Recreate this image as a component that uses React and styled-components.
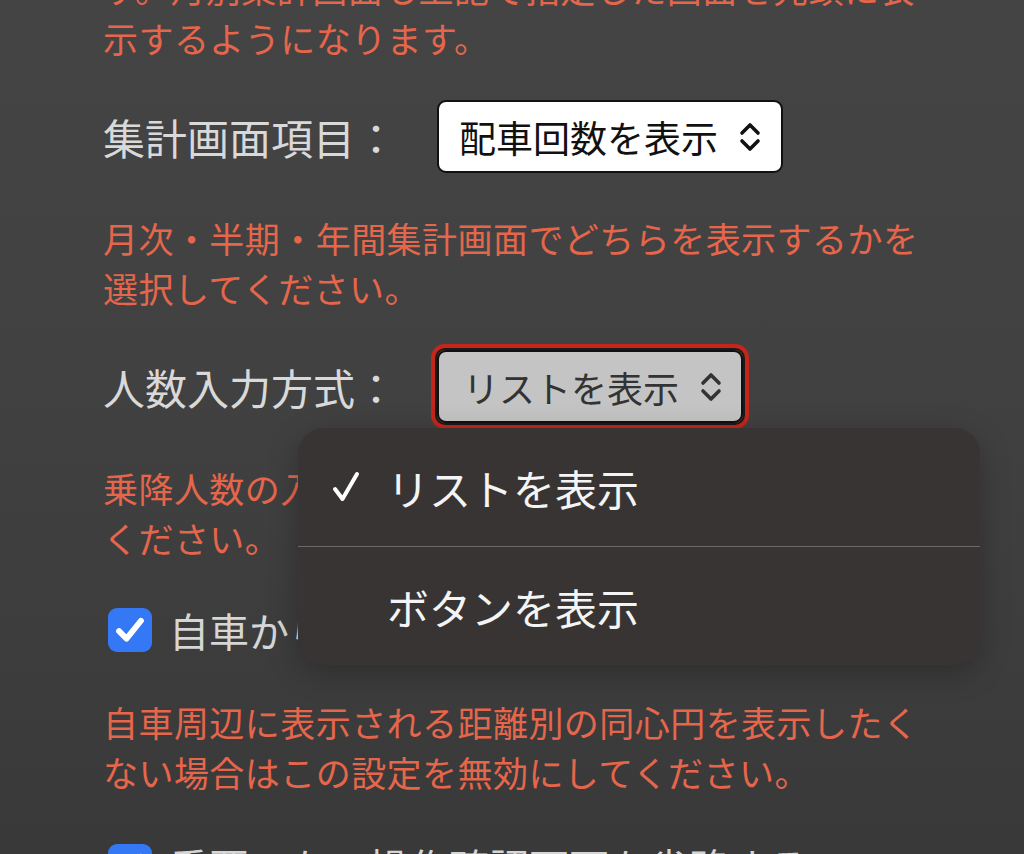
import React from 'react';
import styled, { createGlobalStyle } from 'styled-components';

const GlobalStyle = createGlobalStyle`
  html, body {
    margin: 0;
    padding: 0;
    height: 854px;
    overflow: hidden;
    background: #3e3e3e;
  }
`;

const Page = styled.div`
  height: 854px;
  overflow: hidden;
  box-sizing: border-box;
  padding: 0 60px 0 103px;
  background: linear-gradient(180deg, #444444 0%, #414141 45%, #393939 100%);
  font-family: 'Noto Sans CJK JP', 'Noto Sans', sans-serif;
`;

const Note = styled.p`
  margin: ${(p) => p.$top || 0}px 0 0;
  color: #e6664b;
  font-size: 35px;
  letter-spacing: 0.45px;
  line-height: 50px;
  white-space: nowrap;
`;

const SelectRow = styled.div`
  display: flex;
  align-items: center;
  margin: 37px 0 40px;
`;

const Label = styled.span`
  width: 334px;
  flex-shrink: 0;
  color: #d9d9d9;
  font-size: 42px;
  line-height: 60px;
  white-space: nowrap;
`;

const SelectWrap = styled.div`
  position: relative;
  border-radius: 8px;
  box-shadow: ${(p) => (p.$focused ? '0 0 0 2px #1a1a1a, 0 0 0 6px #c4261a' : 'none')};
`;

const SelectBox = styled.div`
  display: flex;
  align-items: center;
  gap: 20px;
  height: 73px;
  box-sizing: border-box;
  padding: 0 ${(p) => (p.$focused ? 18 : 19)}px 0 ${(p) => (p.$focused ? 24 : 20)}px;
  border: 2px solid #111;
  border-radius: 9px;
  background: ${(p) => (p.$focused ? '#c4c4c4' : '#ffffff')};
  color: ${(p) => (p.$focused ? '#333333' : '#111111')};
  font-size: ${(p) => (p.$focused ? 36 : 37)}px;
  white-space: nowrap;
`;

const Menu = styled.div`
  position: absolute;
  left: -139px;
  top: 78px;
  width: 682px;
  border-radius: 26px;
  background: #373433;
  box-shadow: 0 8px 30px rgba(0, 0, 0, 0.25);
  overflow: hidden;
  z-index: 5;
`;

const MenuItem = styled.div`
  display: flex;
  align-items: center;
  height: 118px;
  padding-left: 34px;
  color: #f4f4f4;
  font-size: 42px;
  white-space: nowrap;
  & + & {
    border-top: 1px solid #6c6a69;
  }
`;

const CheckSlot = styled.span`
  width: 55px;
  display: flex;
  align-items: center;
`;

const CheckRow = styled.label`
  display: flex;
  align-items: center;
  gap: 17px;
  height: 54px;
  margin: ${(p) => p.$top || 40}px 0 40px 5px;
  color: #d6d6d6;
  font-size: 40px;
  white-space: nowrap;
`;

const Box = styled.span`
  width: 44px;
  height: 44px;
  flex-shrink: 0;
  border-radius: 9px;
  background: #3478f6;
  display: flex;
  align-items: center;
  justify-content: center;
`;

const Chevrons = () => (
  <svg width="24" height="32" viewBox="0 0 24 32" fill="none">
    <path d="M4 12 L12 4 L20 12" stroke="currentColor" strokeWidth="3.6" strokeLinecap="round" strokeLinejoin="round" />
    <path d="M4 20 L12 28 L20 20" stroke="currentColor" strokeWidth="3.6" strokeLinecap="round" strokeLinejoin="round" />
  </svg>
);

const Tick = () => (
  <svg width="30" height="30" viewBox="0 0 26 26" fill="none">
    <path d="M3.5 14 L10 20.5 L22.5 5" stroke="#fff" strokeWidth="5" strokeLinecap="round" strokeLinejoin="round" />
  </svg>
);

const MenuTick = () => (
  <svg width="28" height="32" viewBox="0 0 28 32" fill="none">
    <path d="M3 18 L10.5 28 L25 3" stroke="#fff" strokeWidth="4" strokeLinecap="round" strokeLinejoin="round" />
  </svg>
);

export default function App() {
  return (
    <>
      <GlobalStyle />
      <Page>
        <Note $top={-37}>
          す。月別集計画面も上記で指定した画面を先頭に表
          <br />
          示するようになります。
        </Note>

        <SelectRow>
          <Label>集計画面項目：</Label>
          <SelectWrap>
            <SelectBox>
              配車回数を表示
              <Chevrons />
            </SelectBox>
          </SelectWrap>
        </SelectRow>

        <Note>
          月次・半期・年間集計画面でどちらを表示するかを
          <br />
          選択してください。
        </Note>

        <SelectRow>
          <Label>人数入力方式：</Label>
          <SelectWrap $focused>
            <SelectBox $focused>
              リストを表示
              <Chevrons />
            </SelectBox>
            <Menu>
              <MenuItem>
                <CheckSlot>
                  <MenuTick />
                </CheckSlot>
                リストを表示
              </MenuItem>
              <MenuItem>
                <CheckSlot />
                ボタンを表示
              </MenuItem>
            </Menu>
          </SelectWrap>
        </SelectRow>

        <Note>
          乗降人数の入力方式をリストかボタンで選択して
          <br />
          ください。
        </Note>

        <CheckRow>
          <Box>
            <Tick />
          </Box>
          自車からの距離円を表示する
        </CheckRow>

        <Note>
          自車周辺に表示される距離別の同心円を表示したく
          <br />
          ない場合はこの設定を無効にしてください。
        </Note>

        <CheckRow $top={42}>
          <Box>
            <Tick />
          </Box>
          重要でない操作確認画面を省略する
        </CheckRow>
      </Page>
    </>
  );
}
